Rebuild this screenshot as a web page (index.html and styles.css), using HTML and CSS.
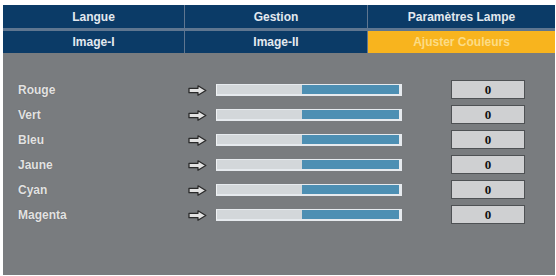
FILE: index.html
```html
<!DOCTYPE html>
<html lang="fr">
<head>
<meta charset="utf-8">
<title>Ajuster Couleurs</title>
<link rel="stylesheet" href="styles.css">
</head>
<body>
<div class="panel">
  <div class="tabs">
    <div class="tab">Langue</div>
    <div class="tab">Gestion</div>
    <div class="tab">Paramètres Lampe</div>
    <div class="tab">Image-I</div>
    <div class="tab">Image-II</div>
    <div class="tab active">Ajuster Couleurs</div>
  </div>
  <div class="content">
    <div class="rows">
      <div class="label">Rouge</div>
      <svg class="arrow" width="19" height="11" viewBox="0 0 19 11"><path d="M1 3.3 H10 V0.8 L17.8 5.5 L10 10.2 V7.7 H1 Z" fill="#e2e2e2" stroke="#2a2a2a" stroke-width="1.3" stroke-linejoin="round"/></svg>
      <div class="bar"><div class="bar-left"></div><div class="bar-right"></div></div>
      <div></div>
      <div class="value">0</div>

      <div class="label">Vert</div>
      <svg class="arrow" width="19" height="11" viewBox="0 0 19 11"><path d="M1 3.3 H10 V0.8 L17.8 5.5 L10 10.2 V7.7 H1 Z" fill="#e2e2e2" stroke="#2a2a2a" stroke-width="1.3" stroke-linejoin="round"/></svg>
      <div class="bar"><div class="bar-left"></div><div class="bar-right"></div></div>
      <div></div>
      <div class="value">0</div>

      <div class="label">Bleu</div>
      <svg class="arrow" width="19" height="11" viewBox="0 0 19 11"><path d="M1 3.3 H10 V0.8 L17.8 5.5 L10 10.2 V7.7 H1 Z" fill="#e2e2e2" stroke="#2a2a2a" stroke-width="1.3" stroke-linejoin="round"/></svg>
      <div class="bar"><div class="bar-left"></div><div class="bar-right"></div></div>
      <div></div>
      <div class="value">0</div>

      <div class="label">Jaune</div>
      <svg class="arrow" width="19" height="11" viewBox="0 0 19 11"><path d="M1 3.3 H10 V0.8 L17.8 5.5 L10 10.2 V7.7 H1 Z" fill="#e2e2e2" stroke="#2a2a2a" stroke-width="1.3" stroke-linejoin="round"/></svg>
      <div class="bar"><div class="bar-left"></div><div class="bar-right"></div></div>
      <div></div>
      <div class="value">0</div>

      <div class="label">Cyan</div>
      <svg class="arrow" width="19" height="11" viewBox="0 0 19 11"><path d="M1 3.3 H10 V0.8 L17.8 5.5 L10 10.2 V7.7 H1 Z" fill="#e2e2e2" stroke="#2a2a2a" stroke-width="1.3" stroke-linejoin="round"/></svg>
      <div class="bar"><div class="bar-left"></div><div class="bar-right"></div></div>
      <div></div>
      <div class="value">0</div>

      <div class="label">Magenta</div>
      <svg class="arrow" width="19" height="11" viewBox="0 0 19 11"><path d="M1 3.3 H10 V0.8 L17.8 5.5 L10 10.2 V7.7 H1 Z" fill="#e2e2e2" stroke="#2a2a2a" stroke-width="1.3" stroke-linejoin="round"/></svg>
      <div class="bar"><div class="bar-left"></div><div class="bar-right"></div></div>
      <div></div>
      <div class="value">0</div>
    </div>
  </div>
</div>
</body>
</html>
```
FILE: styles.css
```css
html, body {
  margin: 0;
  padding: 0;
  background: #ffffff;
}
body {
  width: 556px;
  height: 276px;
  overflow: hidden;
  font-family: "Liberation Sans", Arial, sans-serif;
}
.panel {
  margin: 5px 0 0 3px;
  width: 552px;
  height: 270px;
  display: flex;
  flex-direction: column;
  background: #7a7d80;
}
.tabs {
  display: grid;
  grid-template-columns: 181px 182px 187px;
  grid-template-rows: 23px 22px;
  column-gap: 1px;
  row-gap: 3px;
  background: #5f7690;
}
.tab {
  background: #0b3b67;
  color: #e3e9ef;
  font-weight: bold;
  font-size: 12px;
  display: flex;
  align-items: center;
  justify-content: center;
}
.tab.active {
  background: #f8b41e;
  color: #fcdc86;
}
.content {
  flex: 1;
  padding: 24px 0 0 15px;
  background: #797c7f;
}
.rows {
  display: grid;
  grid-template-columns: 170px 28px 186px 49px 74px;
  grid-auto-rows: 25px;
  align-items: center;
}
.label {
  color: #e2e2e2;
  font-weight: bold;
  font-size: 12px;
  text-shadow: 0 0 1px rgba(60,60,60,0.5);
}
.arrow {
  display: block;
  margin-top: 2px;
}
.bar {
  height: 9px;
  display: flex;
  border: 1px solid #e6eaee;
  border-bottom-width: 2px;
  border-left-color: #f0f2f4;
  background: #e6eaee;
}
.bar-left {
  flex: 0 0 85px;
  background: #d3d7da;
}
.bar-right {
  flex: 1;
  background: #4d8fb3;
  margin-right: 2px;
}
.value {
  height: 17px;
  border: 1px solid #4e5154;
  background: #cfd0d2;
  display: flex;
  align-items: center;
  justify-content: center;
  font-family: "Liberation Serif", "Times New Roman", serif;
  font-weight: bold;
  font-size: 13px;
  color: #111111;
}
```
